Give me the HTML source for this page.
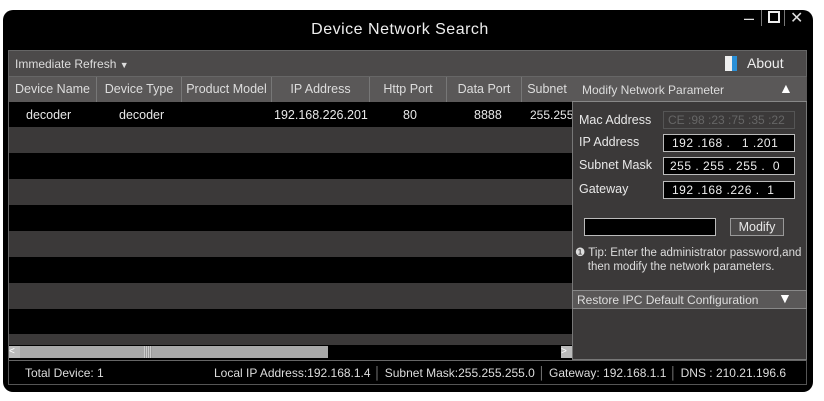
<!DOCTYPE html>
<html><head><style>
*{margin:0;padding:0;box-sizing:border-box}
body{width:824px;height:401px;background:#fff;position:relative;overflow:hidden;font-family:"Liberation Sans",sans-serif;color:#e8e8e8}
.win{position:absolute;left:3px;top:10px;width:810px;height:382px;background:#000;border-radius:10px}
.a{position:absolute}
.t{white-space:nowrap;position:absolute}
.hd div{position:absolute;top:0;height:25px;line-height:25px;text-align:center;font-size:12.5px;border-right:1px solid #777;color:#ddd;white-space:nowrap;overflow:hidden}
.row{position:absolute;left:9px;width:563px;height:26px}
.inp{position:absolute;background:#000;border:1px solid #bbb;font-size:12px;letter-spacing:0.5px;line-height:16px;padding-left:8px;color:#eee;height:18px;white-space:nowrap;overflow:hidden}
</style></head><body>
<div class="win"></div>
<div class="t" style="left:0;width:800px;text-align:center;top:21px;font-size:16px;letter-spacing:0.5px;color:#eee">Device Network Search</div>
<div class="t" style="left:744px;top:8px;font-size:18px;color:#ddd">–</div>
<div class="a" style="left:768px;top:11px;width:12px;height:12px;border:2.5px solid #eee"></div>
<div class="a" style="left:761px;top:10px;width:1px;height:16px;background:#777"></div>
<div class="a" style="left:784px;top:10px;width:1px;height:16px;background:#777"></div>
<div class="t" style="left:790px;top:8px;font-size:16px;color:#ddd">✕</div>
<div class="a" style="left:8px;top:50px;width:799px;height:27px;background:#4c4a4a;border:1px solid #666"></div>
<div class="t" style="left:15px;top:57px;font-size:12px;color:#ddd">Immediate Refresh <span style="font-size:9px">▼</span></div>
<div class="a" style="left:725px;top:56px;width:11px;height:15px;background:#eee"></div>
<div class="a" style="left:732px;top:56px;width:5px;height:15px;background:#2a8fd6"></div>
<div class="t" style="left:747px;top:55px;font-size:14px;color:#eee">About</div>
<div class="a" style="left:8px;top:77px;width:565px;height:283px;background:#000;border-left:1px solid #666"></div>
<div class="hd a" style="left:9px;top:77px;width:563px;height:25px;background:#5a5858">
<div style="left:0;width:88px">Device Name</div><div style="left:88px;width:85px">Device Type</div><div style="left:173px;width:90px">Product Model</div><div style="left:263px;width:98px">IP Address</div><div style="left:361px;width:77px">Http Port</div><div style="left:438px;width:75px">Data Port</div><div style="left:513px;width:50px;border:none">Subnet</div>
</div>
<div class="row" style="top:127px;background:#3b3939"></div>
<div class="row" style="top:179px;background:#3b3939"></div>
<div class="row" style="top:231px;background:#3b3939"></div>
<div class="row" style="top:283px;background:#3b3939"></div>
<div class="row" style="top:334px;height:11px;background:#3b3939"></div>
<div class="t" style="left:26px;top:108px;font-size:12.5px">decoder</div>
<div class="t" style="left:119px;top:108px;font-size:12.5px">decoder</div>
<div class="t" style="left:274px;top:108px;font-size:12.5px">192.168.226.201</div>
<div class="t" style="left:403px;top:108px;font-size:12.5px">80</div>
<div class="t" style="left:474px;top:108px;font-size:12.5px">8888</div>
<div class="a" style="left:528px;top:102px;width:44px;height:24px;overflow:hidden"><div class="t" style="left:2px;top:6px;font-size:12px">255.255</div></div>
<div class="a" style="left:9px;top:345px;width:563px;height:14px;background:#000"></div>
<div class="a" style="left:9px;top:346px;width:11px;height:12px;background:#bbb;color:#fff;font-size:10px;line-height:12px">&lt;</div>
<div class="a" style="left:20px;top:346px;width:308px;height:12px;background:#a8a8a8"></div>
<div class="a" style="left:144px;top:346px;width:8px;height:12px;background:repeating-linear-gradient(90deg,#ccc 0 1px,#999 1px 2px)"></div>
<div class="a" style="left:561px;top:346px;width:11px;height:12px;background:#bbb;color:#fff;font-size:10px;line-height:12px">&gt;</div>
<div class="a" style="left:572px;top:77px;width:235px;height:283px;background:#3b3939;border:1px solid #777;border-top:none"></div>
<div class="a" style="left:572px;top:77px;width:235px;height:25px;background:#5a5858;border-bottom:1px solid #888"></div>
<div class="t" style="left:582px;top:83px;font-size:12px;color:#ddd">Modify Network Parameter</div>
<div class="t" style="left:779px;top:80px;font-size:14px;color:#fff">▲</div>
<div class="t" style="left:579px;top:113px;font-size:12.5px">Mac Address</div>
<div class="t" style="left:579px;top:135px;font-size:12.5px">IP Address</div>
<div class="t" style="left:579px;top:158px;font-size:12.5px">Subnet Mask</div>
<div class="t" style="left:579px;top:182px;font-size:12.5px">Gateway</div>
<div class="inp" style="left:663px;top:111px;width:132px;border-color:#555;background:#3b3939;color:#666;padding-left:4px;letter-spacing:0">CE :98 :23 :75 :35 :22</div>
<div class="inp" style="left:663px;top:134px;width:132px">192 .168 .&nbsp;&nbsp;&nbsp;1 .201</div>
<div class="inp" style="left:663px;top:157px;width:132px;padding-left:6px">255 . 255 . 255 .&nbsp;&nbsp;0</div>
<div class="inp" style="left:663px;top:181px;width:132px">192 .168 .226 .&nbsp;&nbsp;1</div>
<div class="a" style="left:584px;top:218px;width:132px;height:18px;background:#000;border:1px solid #bbb"></div>
<div class="a" style="left:730px;top:218px;width:54px;height:18px;background:#4a4848;border:1px solid #999;font-size:12.5px;text-align:center;line-height:16px">Modify</div>
<div class="t" style="left:575px;top:246px;font-size:11.5px;line-height:14px;color:#ddd">❶ Tip: Enter the administrator password,and<br>&nbsp;&nbsp;&nbsp;&nbsp;then modify the network parameters.</div>
<div class="a" style="left:572px;top:290px;width:235px;height:19px;background:#5a5858;border:1px solid #888"></div>
<div class="t" style="left:577px;top:293px;font-size:12px;color:#ddd">Restore IPC Default Configuration</div>
<div class="t" style="left:778px;top:290px;font-size:14px;color:#fff">▼</div>
<div class="a" style="left:8px;top:360px;width:799px;height:25px;border:1px solid #555;border-top:1px solid #666"></div>
<div class="t" style="left:25px;top:366px;font-size:12px;color:#ddd">Total Device: 1</div>
<div class="t" style="left:214px;top:366px;font-size:12px;color:#ddd">Local IP Address:192.168.1.4 <span style="color:#888">│</span> Subnet Mask:255.255.255.0 <span style="color:#888">│</span> Gateway: 192.168.1.1 <span style="color:#888">│</span> DNS : 210.21.196.6</div>
</body></html>
